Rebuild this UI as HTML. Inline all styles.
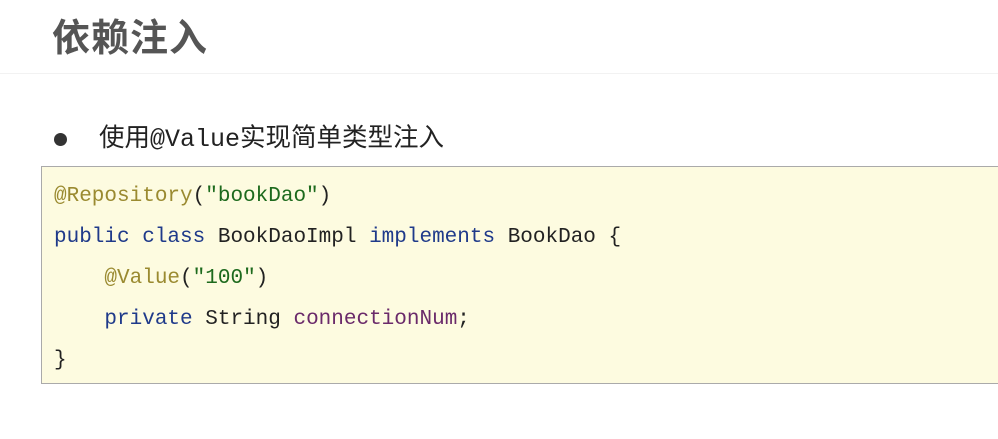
<!DOCTYPE html>
<html><head><meta charset="utf-8"><style>
body{margin:0;width:998px;height:439px;background:#fff;position:relative;overflow:hidden;font-family:"Liberation Sans","Noto Sans CJK SC",sans-serif}
.t{position:absolute;left:52px;top:14px;font-size:38px;font-weight:bold;color:#555;line-height:50px;letter-spacing:1px}
.hr{position:absolute;left:0;top:73px;width:998px;height:1px;background:#f2f2f2}
.dot{position:absolute;left:54px;top:133px;width:13px;height:13px;border-radius:50%;background:#333}
.b{position:absolute;left:99px;top:122px;font-size:25.5px;color:#222;line-height:32px}
.b .m{font-family:"Liberation Mono",monospace;font-size:25px}
.box{position:absolute;left:41px;top:166px;width:970px;height:218px;background:#fdfbe0;border:1px solid #aaa;box-sizing:border-box}
pre{margin:0;position:absolute;left:12px;top:9px;font-family:"Liberation Mono",monospace;font-size:21px;line-height:41px;color:#222}
.a{color:#9a8a30}.s{color:#1d6a1d}.k{color:#1f3a8a}.f{color:#6a2a6a}
</style></head><body>
<div class="t">依赖注入</div>
<div class="hr"></div>
<div class="dot"></div>
<div class="b">使用<span class="m">@Value</span>实现简单类型注入</div>
<div class="box"><pre><span class="a">@Repository</span>(<span class="s">"bookDao"</span>)
<span class="k">public class</span> BookDaoImpl <span class="k">implements</span> BookDao {
    <span class="a">@Value</span>(<span class="s">"100"</span>)
    <span class="k">private</span> String <span class="f">connectionNum</span>;
}</pre></div>
</body></html>
